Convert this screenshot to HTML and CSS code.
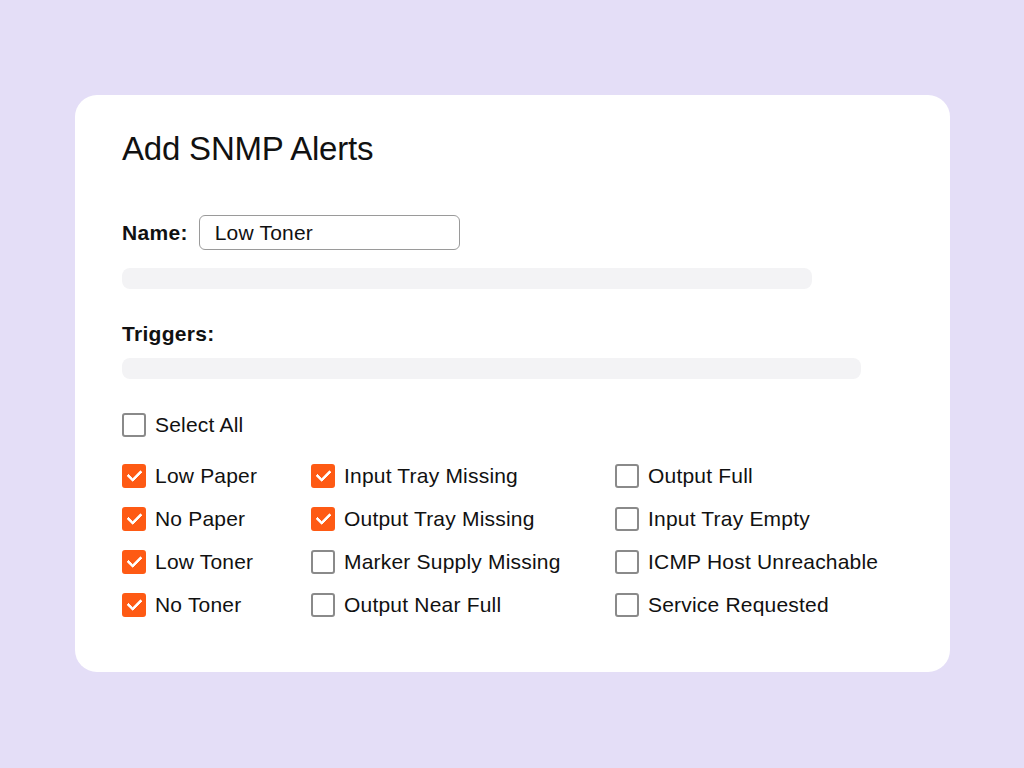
FILE: index.html
```html
<!DOCTYPE html>
<html lang="en">
<head>
  <meta charset="UTF-8" />
  <meta name="viewport" content="width=device-width, initial-scale=1.0" />
  <title>Add SNMP Alerts</title>
  <link rel="stylesheet" href="styles.css">
</head>
<body>
  <div class="card">
    <h1 class="title">Add SNMP Alerts</h1>

    <div class="field">
      <label class="label" for="alertName">Name:</label>
      <input type="text" id="alertName" class="text-input" value="Low Toner" />
    </div>
    <div class="placeholder bar-short"></div>

    <div class="label triggers">Triggers:</div>
    <div class="placeholder bar-long"></div>

    <label class="check select-all"><span class="box"></span>Select All</label>

    <div class="trigger-grid">
      <label class="check"><span class="box on"></span>Low Paper</label>
      <label class="check"><span class="box on"></span>Input Tray Missing</label>
      <label class="check"><span class="box"></span>Output Full</label>

      <label class="check"><span class="box on"></span>No Paper</label>
      <label class="check"><span class="box on"></span>Output Tray Missing</label>
      <label class="check"><span class="box"></span>Input Tray Empty</label>

      <label class="check"><span class="box on"></span>Low Toner</label>
      <label class="check"><span class="box"></span>Marker Supply Missing</label>
      <label class="check"><span class="box"></span>ICMP Host Unreachable</label>

      <label class="check"><span class="box on"></span>No Toner</label>
      <label class="check"><span class="box"></span>Output Near Full</label>
      <label class="check"><span class="box"></span>Service Requested</label>
    </div>
  </div>
</body>
</html>
```

FILE: styles.css
```css
html, body { margin: 0; height: 100%; }
body { background: #e4def7; font-family: "Liberation Sans", Arial, sans-serif; color: #111; padding: 95px 74px 0 75px; box-sizing: border-box; }
.card { background: #fff; border-radius: 22px; height: 577px; box-sizing: border-box; padding: 35px 47px 0 47px; }
.title { font-weight: 400; font-size: 33px; margin: 0 0 47px; letter-spacing: -0.2px; }
.field { display: flex; align-items: center; gap: 11px; }
.label { font-weight: 700; font-size: 21px; letter-spacing: 0.3px; }
.text-input { width: 261px; height: 35px; box-sizing: border-box; border: 1px solid #9a9a9a; border-radius: 6px; padding: 0 15px; font: 21px "Liberation Sans", Arial, sans-serif; letter-spacing: 0.2px; color: #111; outline: none; }
.placeholder { background: #f3f3f5; height: 21px; border-radius: 8px; }
.bar-short { width: 690px; margin-top: 18px; }
.bar-long { width: 739px; margin-top: 12px; }
.triggers { margin-top: 33px; }
.check { display: flex; align-items: center; gap: 9px; font-size: 21px; letter-spacing: 0.2px; height: 24px; cursor: pointer; }
.select-all { margin-top: 34px; }
.box { width: 20px; height: 20px; border: 2px solid #8a8a8a; border-radius: 3px; flex: none; position: relative; }
.box.on { background: #fe5a14; border-color: #fe5a14; }
.box.on::after { content: ""; position: absolute; left: 6px; top: 1px; width: 6px; height: 11px; border: solid #fff; border-width: 0 3px 3px 0; border-radius: 1px; transform: rotate(45deg); }
.trigger-grid { display: grid; grid-template-columns: 189px 304px auto; row-gap: 19px; margin-top: 27px; }
```
